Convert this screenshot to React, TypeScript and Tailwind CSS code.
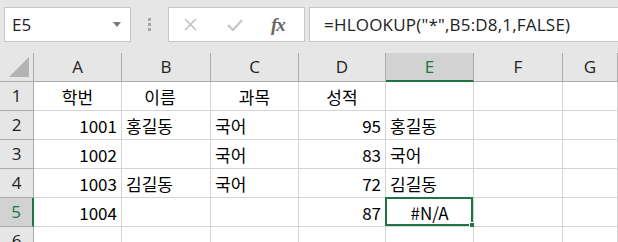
import React from 'react';

const cols = ['A', 'B', 'C', 'D', 'E', 'F', 'G'];

type Cell = { v: string; align?: 'left' | 'right' | 'center'; extra?: string };

const rows: Cell[][] = [
  [
    { v: '학번', align: 'center' },
    { v: '이름', align: 'center', extra: 'pr-[12px]' },
    { v: '과목', align: 'center' },
    { v: '성적', align: 'center' },
    { v: '' },
    { v: '' },
    { v: '' },
  ],
  [
    { v: '1001', align: 'right' },
    { v: '홍길동' },
    { v: '국어' },
    { v: '95', align: 'right' },
    { v: '홍길동' },
    { v: '' },
    { v: '' },
  ],
  [
    { v: '1002', align: 'right' },
    { v: '' },
    { v: '국어' },
    { v: '83', align: 'right' },
    { v: '국어' },
    { v: '' },
    { v: '' },
  ],
  [
    { v: '1003', align: 'right' },
    { v: '김길동' },
    { v: '국어' },
    { v: '72', align: 'right' },
    { v: '김길동' },
    { v: '' },
    { v: '' },
  ],
  [
    { v: '1004', align: 'right' },
    { v: '' },
    { v: '' },
    { v: '87', align: 'right' },
    { v: '#N/A', align: 'center' },
    { v: '' },
    { v: '' },
  ],
  [{ v: '' }, { v: '' }, { v: '' }, { v: '' }, { v: '' }, { v: '' }, { v: '' }],
];

const alignCls = {
  left: 'justify-start pl-[4px]',
  right: 'justify-end pr-[4px]',
  center: 'justify-center',
};

const App = () => {
  return (
    <div className="w-[618px] h-[242px] overflow-hidden bg-[#e6e6e6] font-['Noto_Sans_CJK_KR',sans-serif]">
      {/* formula bar */}
      <div className="h-[53px] flex items-start pt-[7px] pl-[4px]">
        <div className="w-[127px] h-[35px] bg-white border border-[#c6c6c6] flex items-center justify-between pl-[7px] pr-[9px]">
          <span className="text-[17px] text-[#222] font-['Open_Sans',sans-serif]">E5</span>
          <svg width="8" height="5" viewBox="0 0 8 5">
            <path d="M0 0h8L4 5z" fill="#777" />
          </svg>
        </div>
        <div className="w-[37px] h-[35px] flex flex-col items-center justify-center gap-[2px]">
          <span className="w-[3px] h-[3px] bg-[#a6a6a6]" />
          <span className="w-[3px] h-[3px] bg-[#a6a6a6]" />
          <span className="w-[3px] h-[3px] bg-[#a6a6a6]" />
        </div>
        <div className="w-[137px] h-[35px] bg-white border border-[#c6c6c6] flex items-center">
          <svg className="ml-[15px]" width="13" height="13" viewBox="0 0 13 13">
            <path d="M1 1L12 12M12 1L1 12" stroke="#c2c2c2" strokeWidth="1.6" />
          </svg>
          <svg className="ml-[30px]" width="16" height="12" viewBox="0 0 16 12">
            <path d="M1 6l5 5L15 1" stroke="#c8c8c8" strokeWidth="2.4" fill="none" />
          </svg>
          <span className="ml-[28px] text-[19px] italic font-bold text-[#666] font-['Liberation_Serif',serif] tracking-[-1px] leading-none">
            fx
          </span>
        </div>
        <div className="ml-[4px] flex-1 h-[35px] bg-white border border-[#c6c6c6] border-r-0 flex items-center pl-[14px]">
          <span className="text-[17px] text-[#222] font-['Open_Sans',sans-serif] tracking-[0.2px]">
            =HLOOKUP("*",B5:D8,1,FALSE)
          </span>
        </div>
      </div>

      {/* sheet */}
      <div className="grid grid-cols-[34px_88px_89px_88px_87px_88px_89px_1fr] auto-rows-[29px]">
        <div className="bg-[#e6e6e6] border-r border-b border-[#ababab] relative">
          <svg className="absolute right-[4px] bottom-[4px]" width="20" height="20" viewBox="0 0 20 20">
            <path d="M20 0V20H0z" fill="#b4b4b4" />
          </svg>
        </div>
        {cols.map((c) =>
          c === 'E' ? (
            <div
              key={c}
              className="bg-[#d2d2d2] border-r border-[#ababab] border-b-2 border-b-[#217346] flex items-center justify-center text-[17px] text-[#217346] font-['Open_Sans',sans-serif]"
            >
              {c}
            </div>
          ) : (
            <div
              key={c}
              className="bg-[#e6e6e6] border-r border-b border-[#ababab] flex items-center justify-center text-[17px] text-[#222] font-['Open_Sans',sans-serif]"
            >
              {c}
            </div>
          )
        )}
        {rows.map((r, i) => (
          <React.Fragment key={i}>
            {i === 4 ? (
              <div className="bg-[#d2d2d2] border-r-2 border-r-[#217346] border-b border-[#ababab] flex items-center justify-center text-[17px] text-[#217346] font-['Open_Sans',sans-serif]">
                {i + 1}
              </div>
            ) : (
              <div className="bg-[#e6e6e6] border-r border-b border-[#ababab] flex items-center justify-center text-[17px] text-[#222] font-['Open_Sans',sans-serif]">
                {i + 1}
              </div>
            )}
            {r.map((cell, j) => (
              <div
                key={j}
                className={`relative bg-white border-r border-b border-[#d4d4d4] flex items-end pb-[1px] text-[17px] leading-[24px] text-black whitespace-nowrap ${
                  alignCls[cell.align ?? 'left']
                } ${cell.extra ?? ''}`}
              >
                {cell.v}
                {i === 4 && j === 4 && (
                  <div className="absolute -left-[1px] -top-[1px] right-0 bottom-0 border-2 border-[#217346]">
                    <span className="absolute -right-[4px] -bottom-[4px] w-[6px] h-[6px] bg-[#217346] border border-white" />
                  </div>
                )}
              </div>
            ))}
          </React.Fragment>
        ))}
      </div>
    </div>
  );
};

export default App;
